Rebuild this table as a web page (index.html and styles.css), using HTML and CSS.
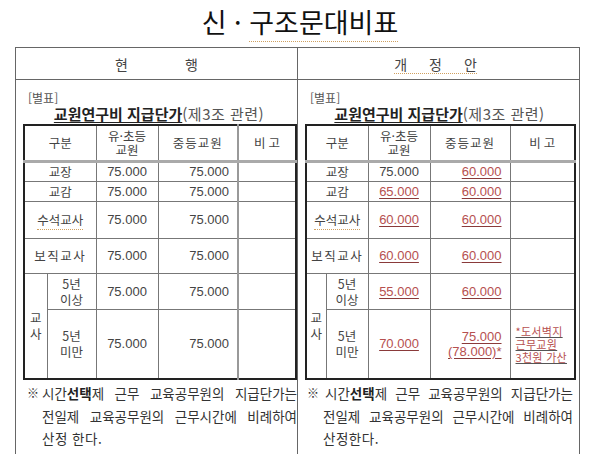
FILE: index.html
```html
<!DOCTYPE html>
<html lang="ko">
<head>
<meta charset="utf-8">
<title>신·구조문대비표</title>
<link rel="stylesheet" href="styles.css">
</head>
<body>
<h1 class="title">신 · <span class="sp">구조문대비표</span></h1>
<table class="outer">
  <colgroup><col class="half"><col class="half"></colgroup>
  <tr class="ohead">
    <th><span class="hd hd-l"><span>현</span><span>행</span></span></th>
    <th><span class="hd hd-r sp"><span>개</span><span>정</span><span>안</span></span></th>
  </tr>
  <tr>
    <td class="ocell cell-l">
      <div class="label">[별표]</div>
      <div class="sub-title"><b>교원연구비 지급단가</b><span class="paren">(제3조 관련)</span></div>
      <table class="inner inner-l">
        <colgroup><col class="l-a"><col class="l-b"><col class="l-c"><col class="l-d"><col class="l-e"></colgroup>
        <tr class="r-h"><th colspan="2">구분</th><th>유·초등<br>교원</th><th class="sp1">중등교원</th><th class="bigo-h sep">비고</th></tr>
        <tr class="r1"><td colspan="2">교장</td><td class="n">75.000</td><td class="nr">75.000</td><td class="sep"></td></tr>
        <tr class="r2"><td colspan="2">교감</td><td class="n">75.000</td><td class="nr">75.000</td><td class="sep"></td></tr>
        <tr class="r3"><td colspan="2"><span class="sp">수석교사</span></td><td class="n">75.000</td><td class="nr">75.000</td><td class="sep"></td></tr>
        <tr class="r4"><td colspan="2" class="wide">보직교사</td><td class="n">75.000</td><td class="nr">75.000</td><td class="sep"></td></tr>
        <tr class="r5"><td rowspan="2" class="gyo">교<br>사</td><td class="ml">5년<br>이상</td><td class="n">75.000</td><td class="nr">75.000</td><td class="sep"></td></tr>
        <tr class="r6"><td class="ml">5년<br>미만</td><td class="n">75.000</td><td class="nr">75.000</td><td class="sep"></td></tr>
      </table>
      <div class="notes notes-l">
        <div class="nfirst"><span class="mark">※</span><span class="nline"><span>시간<b>선택</b>제</span><span>근무</span><span>교육공무원의</span><span>지급단가는</span></span></div>
        <div class="nline"><span>전일제</span><span>교육공무원의</span><span>근무시간에</span><span>비례하여</span></div>
        <div class="nlast">산정 한다.</div>
      </div>
    </td>
    <td class="ocell cell-r">
      <div class="label">[별표]</div>
      <div class="sub-title"><b>교원연구비 지급단가</b><span class="paren">(제3조 관련)</span></div>
      <table class="inner inner-r">
        <colgroup><col class="r-a"><col class="r-b"><col class="r-c"><col class="r-d"><col class="r-e"></colgroup>
        <tr class="r-h"><th colspan="2">구분</th><th>유·초등<br>교원</th><th class="sp1">중등교원</th><th class="bigo-h">비고</th></tr>
        <tr class="r1"><td colspan="2">교장</td><td class="n">75.000</td><td class="nr"><span class="red">60.000</span></td><td></td></tr>
        <tr class="r2"><td colspan="2">교감</td><td class="n"><span class="red">65.000</span></td><td class="nr"><span class="red">60.000</span></td><td></td></tr>
        <tr class="r3"><td colspan="2"><span class="sp">수석교사</span></td><td class="n"><span class="red">60.000</span></td><td class="nr"><span class="red">60.000</span></td><td></td></tr>
        <tr class="r4"><td colspan="2" class="wide">보직교사</td><td class="n"><span class="red">60.000</span></td><td class="nr"><span class="red">60.000</span></td><td></td></tr>
        <tr class="r5"><td rowspan="2" class="gyo">교<br>사</td><td class="ml">5년<br>이상</td><td class="n"><span class="red">55.000</span></td><td class="nr"><span class="red">60.000</span></td><td></td></tr>
        <tr class="r6"><td class="ml">5년<br>미만</td><td class="n"><span class="red">70.000</span></td><td class="nr two"><span class="red">75.000</span><br><span class="red">(78.000)*</span></td><td class="memo"><span class="mred">*도서벽지</span><br><span class="mred">근무교원</span><br><span class="mred">3천원 가산</span></td></tr>
      </table>
      <div class="notes notes-r">
        <div class="nfirst"><span class="mark">※</span><span class="nline"><span>시간<b>선택</b>제</span><span>근무</span><span>교육공무원의</span><span>지급단가는</span></span></div>
        <div class="nline"><span>전일제</span><span>교육공무원의</span><span>근무시간에</span><span>비례하여</span></div>
        <div class="nlast">산정한다.</div>
      </div>
    </td>
  </tr>
</table>
<div class="band"></div>
</body>
</html>
```
FILE: styles.css
```css
html, body {
  margin: 0;
  padding: 0;
}
body {
  width: 600px;
  height: 454px;
  overflow: hidden;
  background: #fff;
  font-family: "Noto Sans CJK KR", "Noto Sans", sans-serif;
  color: #333;
}
.title {
  margin: 0;
  height: 47px;
  line-height: 43px;
  text-align: center;
  font-size: 27px;
  font-weight: 400;
  color: #111;
}
.sp {
  border-bottom: 1px dotted #d0a060;
}
.outer {
  margin-left: 15px;
  width: 565px;
  border-collapse: collapse;
  table-layout: fixed;
}
.outer col.half {
  width: 282px;
}
.ohead th {
  border: 1px solid #666;
  height: 31px;
  padding: 0;
  font-weight: 400;
  font-size: 14px;
  color: #444;
  vertical-align: middle;
}
.hd {
  display: inline-flex;
  gap: 57px;
  line-height: 18px;
}
.hd-r {
  gap: 22px;
  margin-right: 6px;
}
.ocell {
  border: 1px solid #666;
  vertical-align: top;
  height: 369px;
  padding: 11px 2px 0 7px;
}
.cell-r {
  padding: 11px 5px 0 7px;
}
.label {
  font-size: 12px;
  line-height: 14px;
  padding-left: 5px;
  color: #555;
}
.sub-title {
  text-align: center;
  font-size: 15px;
  line-height: 17px;
  color: #222;
  margin-bottom: 2px;
  white-space: nowrap;
}
.sub-title b {
  font-weight: 700;
  text-decoration: underline;
  text-underline-offset: 2px;
  text-decoration-thickness: 1px;
}
.paren {
  color: #555;
  letter-spacing: 0.5px;
}
.inner {
  border-collapse: collapse;
  table-layout: fixed;
  border: 2px solid #222;
  font-size: 12.5px;
  color: #444;
}
.inner-l { width: 272px; }
.inner-r { width: 269px; }
.l-a { width: 23px; }
.l-b { width: 49px; }
.l-c { width: 62px; }
.l-d { width: 80px; }
.l-e { width: 58px; }
.r-a { width: 20px; }
.r-b { width: 42px; }
.r-c { width: 62px; }
.r-d { width: 80px; }
.r-e { width: 65px; }
.inner th, .inner td {
  border: 1px solid #777;
  padding: 0;
  text-align: center;
  vertical-align: middle;
  font-weight: 400;
  line-height: 14px;
}
.inner-l .sep {
  border-left: 2px solid #999;
}
.inner .r-h th {
  border-bottom: 3px solid #aaa;
  height: 34px;
}
.inner .ml, .inner .gyo {
  line-height: 16px;
}
.bigo-h {
  letter-spacing: 3px;
  text-indent: 3px;
}
.sp1 {
  letter-spacing: 1px;
}
.wide {
  letter-spacing: 1.5px;
}
.r1 td { height: 18px; }
.r2 td { height: 19px; }
.r3 td { height: 36px; }
.r4 td { height: 34px; }
.r5 td { height: 35px; }
.r6 td { height: 68px; }
.n, .nr {
  font-family: "Liberation Sans", Arial, sans-serif;
  font-size: 13px;
  color: #444;
}
.inner .nr {
  text-align: right;
  padding-right: 8px;
}
.red {
  color: #b6504f;
  text-decoration: underline;
  text-decoration-color: #8a3a3a;
  text-underline-offset: 2px;
}
.inner .two {
  line-height: 15px;
}
.inner .memo {
  text-align: left;
  padding-left: 5px;
  font-size: 11px;
  line-height: 13px;
}
.mred {
  color: #b6504f;
  text-decoration: underline;
  text-decoration-color: #555;
  letter-spacing: 0.3px;
}
.notes {
  margin-top: 2px;
  font-size: 13.5px;
  line-height: 22.5px;
  color: #333;
  white-space: nowrap;
}
.notes b {
  font-weight: 700;
  color: #222;
}
.notes-l {
  margin-left: 19px;
  margin-right: -2px;
}
.notes-r {
  margin-left: 18px;
  margin-right: 1px;
}
.nfirst {
  display: flex;
}
.mark {
  flex: none;
  width: 15px;
  margin-left: -15px;
  font-size: 12px;
}
.notes-r .mark {
  width: 18px;
  margin-left: -16px;
}
.nline {
  display: flex;
  flex: 1;
  justify-content: space-between;
}
.nlast {
  text-align: left;
  letter-spacing: 0.5px;
}
.band {
  width: 580px;
  height: 6px;
  background: #c9c9c9;
}
```
